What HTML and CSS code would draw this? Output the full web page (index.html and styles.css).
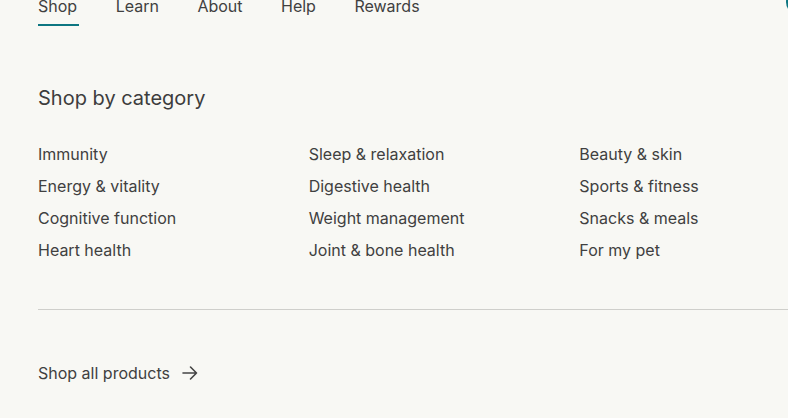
FILE: index.html
```html
<!DOCTYPE html>
<html lang="en">
<head>
<meta charset="utf-8">
<title>Shop by category</title>
<link rel="stylesheet" href="styles.css">
</head>
<body>
<div class="page">
  <nav class="nav">
    <a class="nav-item active" href="#">Shop</a>
    <a class="nav-item" href="#">Learn</a>
    <a class="nav-item" href="#">About</a>
    <a class="nav-item" href="#">Help</a>
    <a class="nav-item" href="#">Rewards</a>
  </nav>
  <span class="account-dot"></span>
  <section class="menu">
    <h2 class="menu-title">Shop by category</h2>
    <div class="cats">
      <ul class="cat-col">
        <li><a href="#">Immunity</a></li>
        <li><a href="#">Energy &amp; vitality</a></li>
        <li><a href="#">Cognitive function</a></li>
        <li><a href="#">Heart health</a></li>
      </ul>
      <ul class="cat-col">
        <li><a href="#">Sleep &amp; relaxation</a></li>
        <li><a href="#">Digestive health</a></li>
        <li><a href="#">Weight management</a></li>
        <li><a href="#">Joint &amp; bone health</a></li>
      </ul>
      <ul class="cat-col">
        <li><a href="#">Beauty &amp; skin</a></li>
        <li><a href="#">Sports &amp; fitness</a></li>
        <li><a href="#">Snacks &amp; meals</a></li>
        <li><a href="#">For my pet</a></li>
      </ul>
    </div>
    <hr class="divider">
    <a class="all-link" href="#">Shop all products
      <svg class="arrow" width="18" height="18" viewBox="0 0 18 18" fill="none" stroke="#444" stroke-width="1.6" stroke-linecap="round" stroke-linejoin="round"><path d="M2 9h13.5M9.5 3l6 6-6 6"/></svg>
    </a>
  </section>
</div>
</body>
</html>
```

FILE: styles.css
```css
html, body {
  margin: 0;
  padding: 0;
  overflow: hidden;
}
body {
  background: #f8f8f4;
  font-family: Inter, "Noto Sans", sans-serif;
  color: #404040;
  width: 788px;
  height: 418px;
  position: relative;
}
a {
  color: inherit;
  text-decoration: none;
}
.page {
  margin-top: -6px;
  padding-left: 38px;
}
.nav {
  display: flex;
  gap: 38.5px;
}
.nav-item {
  font-size: 16px;
  line-height: 24px;
  padding-bottom: 6px;
  border-bottom: 2px solid transparent;
}
.nav-item.active {
  border-bottom-color: #0d7681;
  padding-right: 2px;
  margin-right: -2px;
}
.account-dot {
  position: absolute;
  left: 786px;
  top: -10px;
  width: 24px;
  height: 24px;
  border-radius: 50%;
  background: #0d7681;
}
.menu {
  width: 812px;
}
.menu-title {
  margin: 58px 0 0;
  font-size: 20px;
  line-height: 28px;
  font-weight: 400;
  color: #3d3d3d;
}
.cats {
  margin-top: 30px;
  display: grid;
  grid-template-columns: repeat(3, 1fr);
}
.cat-col {
  list-style: none;
  margin: 0;
  padding: 0;
  display: flex;
  flex-direction: column;
  gap: 8px;
}
.cat-col li {
  font-size: 16px;
  line-height: 24px;
}
.divider {
  margin: 47px 0 0;
  border: 0;
  border-top: 1px solid #cfcfcb;
  height: 0;
}
.all-link {
  margin-top: 51px;
  display: inline-flex;
  align-items: center;
  gap: 11px;
  font-size: 16px;
  line-height: 24px;
}
.arrow {
  display: block;
}
```
